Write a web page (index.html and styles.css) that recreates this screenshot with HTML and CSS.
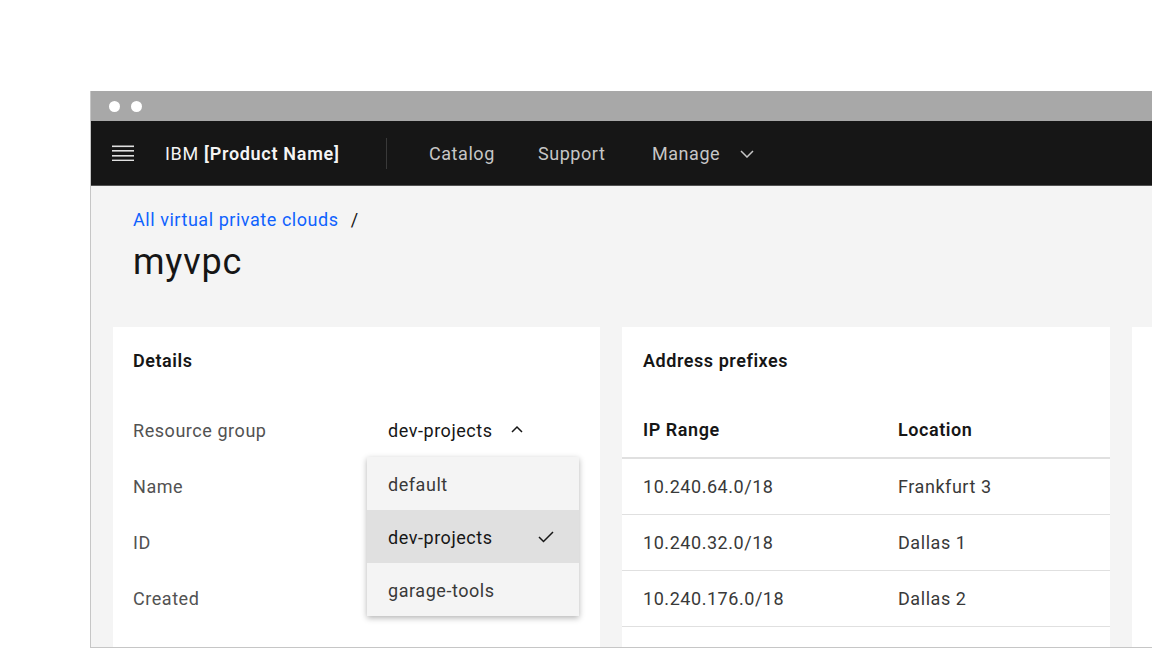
FILE: index.html
```html
<!DOCTYPE html>
<html lang="en">
<head>
<meta charset="utf-8">
<title>myvpc</title>
<link rel="stylesheet" href="styles.css">
</head>
<body>
<div class="window">
  <div class="titlebar">
    <span class="dot"></span>
    <span class="dot"></span>
  </div>
  <header class="shell">
    <svg class="menu-icon" width="22" height="16" viewBox="0 0 22 16" aria-hidden="true">
      <rect x="0" y="0.5" width="22" height="1.6" fill="#e0e0e0"/>
      <rect x="0" y="5" width="22" height="1.6" fill="#e0e0e0"/>
      <rect x="0" y="10" width="22" height="1.6" fill="#e0e0e0"/>
      <rect x="0" y="14.6" width="22" height="1.6" fill="#e0e0e0"/>
    </svg>
    <div class="brand">IBM <strong>[Product Name]</strong></div>
    <span class="divider"></span>
    <nav class="nav">
      <a class="nav-item w-catalog">Catalog</a>
      <a class="nav-item w-support">Support</a>
      <a class="nav-item">Manage
        <svg class="chev" width="14" height="8" viewBox="0 0 14 8" aria-hidden="true"><path d="M1 1 L7 7 L13 1" fill="none" stroke="#c6c6c6" stroke-width="1.5"/></svg>
      </a>
    </nav>
  </header>
  <main class="content">
    <div class="breadcrumb"><a class="crumb-link">All virtual private clouds</a><span class="slash">/</span></div>
    <h1 class="title">myvpc</h1>
    <div class="cards">
      <section class="card details">
        <h2 class="card-title">Details</h2>
        <div class="row"><span class="label">Resource group</span><span class="value">dev-projects
          <svg class="chev-up" width="12" height="8" viewBox="0 0 12 8" aria-hidden="true"><path d="M1 7 L6 2 L11 7" fill="none" stroke="#161616" stroke-width="1.5"/></svg></span></div>
        <div class="row"><span class="label">Name</span></div>
        <div class="row"><span class="label">ID</span></div>
        <div class="row"><span class="label">Created</span></div>
        <ul class="dropdown">
          <li class="opt">default</li>
          <li class="opt selected">dev-projects
            <svg class="check" width="16" height="12" viewBox="0 0 16 12" aria-hidden="true"><path d="M1 6 L5.5 10.5 L15 1" fill="none" stroke="#161616" stroke-width="1.5"/></svg>
          </li>
          <li class="opt">garage-tools</li>
        </ul>
      </section>
      <section class="card prefixes">
        <h2 class="card-title">Address prefixes</h2>
        <div class="table" role="table">
          <div class="tr thead" role="row"><span class="th" role="columnheader">IP Range</span><span class="th" role="columnheader">Location</span></div>
          <div class="tr" role="row"><span class="td" role="cell">10.240.64.0/18</span><span class="td" role="cell">Frankfurt 3</span></div>
          <div class="tr" role="row"><span class="td" role="cell">10.240.32.0/18</span><span class="td" role="cell">Dallas 1</span></div>
          <div class="tr" role="row"><span class="td" role="cell">10.240.176.0/18</span><span class="td" role="cell">Dallas 2</span></div>
          <div class="tr" role="row"><span class="td" role="cell"></span><span class="td" role="cell"></span></div>
        </div>
      </section>
      <section class="card extra"></section>
    </div>
  </main>
</div>
</body>
</html>
```

FILE: styles.css
```css
* { box-sizing: border-box; }
html, body { margin: 0; padding: 0; }
body {
  background: #ffffff;
  font-family: "Roboto", "Noto Sans", "Liberation Sans", sans-serif;
  color: #161616;
  overflow: hidden;
  height: 648px;
  letter-spacing: 0.55px;
}
.window {
  margin-top: 91px;
  margin-left: 90px;
  height: 557px;
  border-left: 1px solid #c6c6c6;
  border-bottom: 1px solid #c6c6c6;
  display: flex;
  flex-direction: column;
  overflow: hidden;
}
.titlebar {
  height: 30px;
  background: #a8a8a8;
  display: flex;
  align-items: center;
  gap: 11px;
  padding-left: 18px;
  flex: none;
}
.dot {
  width: 11px;
  height: 11px;
  border-radius: 50%;
  background: #ffffff;
}
.shell {
  height: 65px;
  flex: none;
  background: #161616;
  border-bottom: 1px solid #525252;
  display: flex;
  align-items: center;
  padding-left: 21px;
}
.menu-icon { flex: none; }
.brand {
  margin-left: 31px;
  font-size: 18px;
  color: #f4f4f4;
  letter-spacing: 0.7px;
  width: 221px;
}
.brand strong { font-weight: 600; }
.divider {
  width: 1px;
  height: 31px;
  background: #393939;
}
.nav {
  display: flex;
  align-items: center;
  margin-left: 42px;
}
.nav-item {
  font-size: 18px;
  color: #c6c6c6;
  display: flex;
  align-items: center;
}
.w-catalog { width: 109px; }
.w-support { width: 114px; }
.chev { margin-left: 20px; margin-top: 2px; }
.content {
  flex: 1;
  background: #f4f4f4;
  padding-top: 22px;
  overflow: hidden;
}
.breadcrumb {
  padding-left: 42px;
  font-size: 18px;
  line-height: 24px;
  display: flex;
  align-items: center;
}
.crumb-link { color: #0f62fe; }
.slash { margin-left: 12px; color: #161616; }
.title {
  margin: 8px 0 0 42px;
  font-size: 36px;
  line-height: 44px;
  font-weight: 400;
  color: #161616;
  letter-spacing: 0.8px;
}
.cards {
  margin-top: 43px;
  padding-left: 22px;
  display: grid;
  grid-template-columns: 487px 488px 488px;
  column-gap: 22px;
  height: 400px;
}
.card {
  background: #ffffff;
  position: relative;
}
.card-title {
  margin: 0;
  padding: 21px 20px 0 20px;
  height: 75px;
  font-size: 18px;
  line-height: 26px;
  font-weight: 600;
  color: #161616;
}
.prefixes .card-title { padding-left: 21px; }
.row {
  height: 56px;
  display: grid;
  grid-template-columns: 255px 1fr;
  align-items: center;
  padding-left: 20px;
  font-size: 18px;
}
.label { color: #525252; }
.value { color: #161616; display: flex; align-items: center; }
.chev-up { margin-left: 18px; margin-top: -2px; }
.dropdown {
  position: absolute;
  left: 254px;
  top: 130px;
  width: 212px;
  margin: 0;
  padding: 0;
  list-style: none;
  background: #f4f4f4;
  box-shadow: 0 2px 6px rgba(0, 0, 0, 0.3);
}
.opt {
  height: 53px;
  display: flex;
  align-items: center;
  justify-content: space-between;
  padding: 1px 25px 0 21px;
  font-size: 18px;
  color: #393939;
}
.opt.selected { background: #e0e0e0; color: #161616; }
.check { flex: none; }
.table {
  font-size: 18px;
}
.tr {
  display: grid;
  grid-template-columns: 276px 1fr;
  align-items: center;
  height: 56px;
  border-bottom: 1px solid #e0e0e0;
}
.tr.thead {
  height: 57px;
  border-bottom: 2px solid #e0e0e0;
}
.th, .td { padding-left: 21px; }
.th + .th, .td + .td { padding-left: 0; }
.th { font-weight: 600; color: #161616; }
.td { color: #393939; }
```
